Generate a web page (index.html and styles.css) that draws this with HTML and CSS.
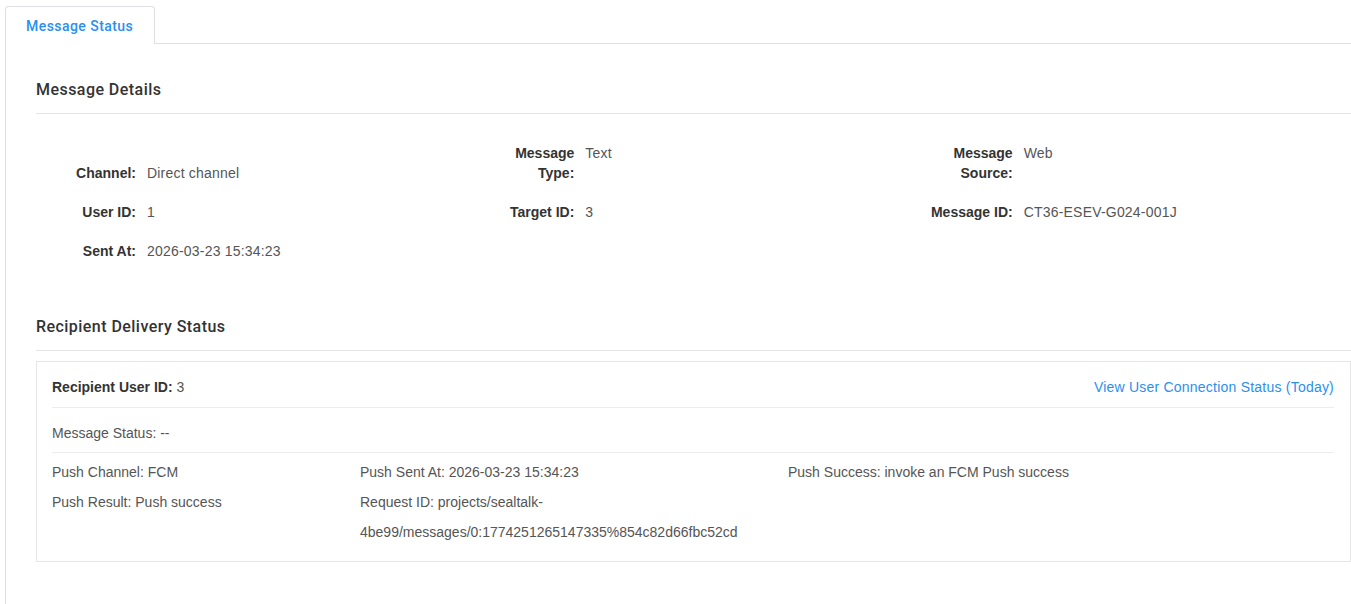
FILE: index.html
```html
<!DOCTYPE html>
<html lang="en">
<head>
<meta charset="utf-8">
<title>Message Status</title>
<link rel="stylesheet" href="styles.css">
</head>
<body>
<div class="page">
  <div class="tabs">
    <div class="tab active">Message Status</div>
    <div class="tab-fill"></div>
  </div>
  <div class="panel">
    <section class="section">
      <h2 class="section-title">Message Details</h2>
      <div class="fields">
        <div class="field"><span class="label">Channel:</span><span class="value">Direct channel</span></div>
        <div class="field"><span class="label">Message Type:</span><span class="value">Text</span></div>
        <div class="field"><span class="label">Message Source:</span><span class="value">Web</span></div>
        <div class="field"><span class="label">User ID:</span><span class="value">1</span></div>
        <div class="field"><span class="label">Target ID:</span><span class="value">3</span></div>
        <div class="field"><span class="label">Message ID:</span><span class="value">CT36-ESEV-G024-001J</span></div>
        <div class="field"><span class="label">Sent At:</span><span class="value">2026-03-23 15:34:23</span></div>
      </div>
    </section>
    <section class="section section-second">
      <h2 class="section-title">Recipient Delivery Status</h2>
      <div class="recipient">
        <div class="recipient-head">
          <div><strong class="strong">Recipient User ID:</strong> 3</div>
          <a class="link" href="#">View User Connection Status (Today)</a>
        </div>
        <div class="recipient-status">Message Status: --</div>
        <div class="push-grid">
          <div class="push-col">
            <div>Push Channel: FCM</div>
            <div>Push Result: Push success</div>
          </div>
          <div class="push-col">
            <div>Push Sent At: 2026-03-23 15:34:23</div>
            <div>Request ID: projects/sealtalk-4be99/messages/0:1774251265147335%854c82d66fbc52cd</div>
          </div>
          <div class="push-col">
            <div>Push Success: invoke an FCM Push success</div>
          </div>
        </div>
      </div>
    </section>
  </div>
</div>
</body>
</html>
```

FILE: styles.css
```css
* { box-sizing: border-box; }

html, body {
  margin: 0;
  padding: 0;
  background: #fff;
  overflow: hidden;
}

body {
  font-family: "Liberation Sans", Arial, sans-serif;
  font-size: 14px;
  color: #555;
}

.page {
  padding: 6px 0 0 5px;
  height: 604px;
  display: flex;
  flex-direction: column;
}

.tabs {
  display: flex;
  align-items: flex-end;
}

.tab {
  height: 38px;
  padding: 0 20px 0 20px;
  width: 150px;
  line-height: 38px;
  border: 1px solid #dcdfe6;
  border-bottom: none;
  border-radius: 4px 4px 0 0;
  color: #2b8ff0;
  font-family: Roboto, "Liberation Sans", Arial, sans-serif;
  font-size: 14px;
  font-weight: 500;
  letter-spacing: 0.45px;
  background: #fff;
}

.tab-fill {
  flex: 1;
  border-bottom: 1px solid #dcdfe6;
}

.panel {
  flex: 1;
  border-left: 1px solid #dcdfe6;
  padding: 0 0 0 30px;
}

.section-title {
  margin: 34px 0 0;
  padding-bottom: 11px;
  border-bottom: 1px solid #e4e4e4;
  font-family: Roboto, "Liberation Sans", Arial, sans-serif;
  font-size: 16px;
  line-height: 24px;
  font-weight: 500;
  letter-spacing: 0.45px;
  color: #333;
}

.section-second .section-title {
  margin-top: 54px;
}

.fields {
  display: grid;
  grid-template-columns: 1fr 1fr 1fr;
  row-gap: 19px;
  align-items: end;
  margin-top: 29px;
}

.field {
  display: flex;
  align-items: flex-start;
  line-height: 20px;
}

.label {
  flex: 0 0 110px;
  padding-right: 10px;
  padding-left: 12px;
  text-align: right;
  font-weight: 700;
  color: #333;
}

.value {
  flex: 1;
  padding-left: 1px;
  color: #555;
  letter-spacing: 0.2px;
}

.recipient {
  margin-top: 10px;
  border: 1px solid #e6e6e6;
  padding: 15px 16px 14px 15px;
  line-height: 20px;
}

.recipient-head {
  display: flex;
  justify-content: space-between;
  padding-bottom: 10px;
  border-bottom: 1px solid #ececec;
  color: #555;
}

.strong {
  font-weight: 700;
  color: #333;
}

.link {
  color: #2b8ff0;
  text-decoration: none;
  letter-spacing: 0.22px;
}

.recipient-status {
  padding: 15px 0 9px;
  border-bottom: 1px solid #ececec;
}

.push-grid {
  display: grid;
  grid-template-columns: 308px 428px 1fr;
  padding-top: 4px;
  line-height: 30px;
}

.push-col {
  padding-right: 12px;
}
```
